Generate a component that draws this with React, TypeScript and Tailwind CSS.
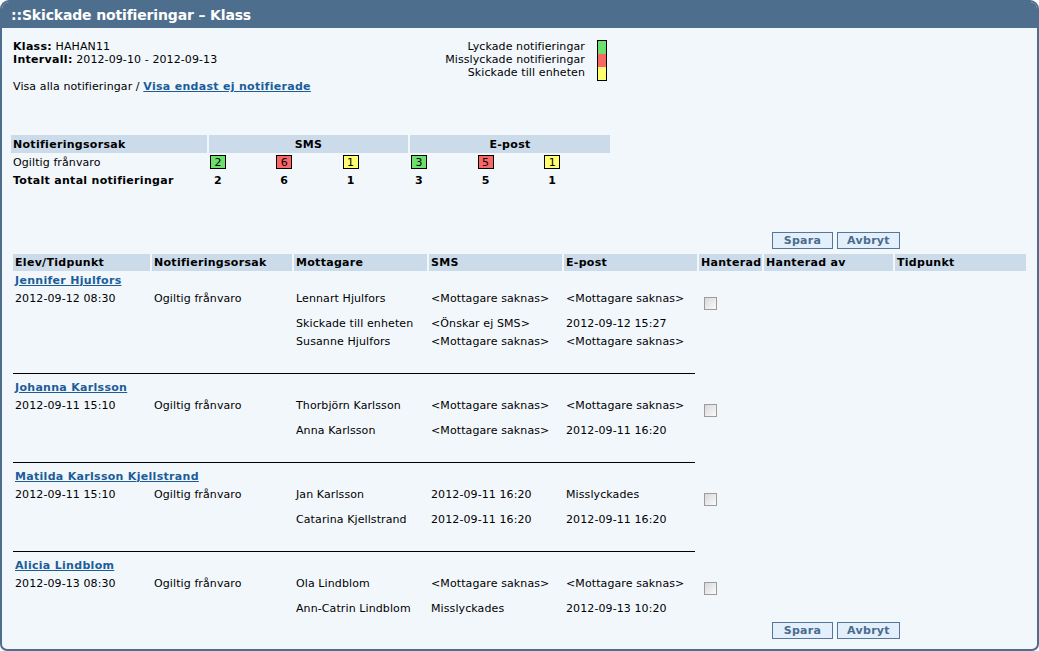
import React from "react";

type Recipient = { name: string; sms: string; email: string };
type Student = { name: string; time: string; reason: string; recipients: Recipient[] };

const students: Student[] = [
  {
    name: "Jennifer Hjulfors",
    time: "2012-09-12 08:30",
    reason: "Ogiltig frånvaro",
    recipients: [
      { name: "Lennart Hjulfors", sms: "<Mottagare saknas>", email: "<Mottagare saknas>" },
      { name: "Skickade till enheten", sms: "<Önskar ej SMS>", email: "2012-09-12 15:27" },
      { name: "Susanne Hjulfors", sms: "<Mottagare saknas>", email: "<Mottagare saknas>" },
    ],
  },
  {
    name: "Johanna Karlsson",
    time: "2012-09-11 15:10",
    reason: "Ogiltig frånvaro",
    recipients: [
      { name: "Thorbjörn Karlsson", sms: "<Mottagare saknas>", email: "<Mottagare saknas>" },
      { name: "Anna Karlsson", sms: "<Mottagare saknas>", email: "2012-09-11 16:20" },
    ],
  },
  {
    name: "Matilda Karlsson Kjellstrand",
    time: "2012-09-11 15:10",
    reason: "Ogiltig frånvaro",
    recipients: [
      { name: "Jan Karlsson", sms: "2012-09-11 16:20", email: "Misslyckades" },
      { name: "Catarina Kjellstrand", sms: "2012-09-11 16:20", email: "2012-09-11 16:20" },
    ],
  },
  {
    name: "Alicia Lindblom",
    time: "2012-09-13 08:30",
    reason: "Ogiltig frånvaro",
    recipients: [
      { name: "Ola Lindblom", sms: "<Mottagare saknas>", email: "<Mottagare saknas>" },
      { name: "Ann-Catrin Lindblom", sms: "Misslyckades", email: "2012-09-13 10:20" },
    ],
  },
];

const GRID = "grid grid-cols-[137px_140px_133px_133px_133px_63px_129px_131px] gap-x-[2px]";
const SUM_GRID = "grid grid-cols-[196px_199px_200px] gap-x-[2px]";
const BOLD = "font-bold tracking-[0.3px]";

const Badge: React.FC<{ value: number; color: string }> = ({ value, color }) => (
  <div className={`w-[16px] h-[14px] border border-black flex items-center justify-center ${color}`}>
    {value}
  </div>
);

const Buttons: React.FC = () => (
  <div className="flex justify-end gap-[4px] pr-[137px]">
    <button className={`w-[61px] h-[17px] border border-[#557799] bg-[#e3f0fb] text-[#4a6b8e] leading-[15px] ${BOLD}`}>
      Spara
    </button>
    <button className={`w-[63px] h-[17px] border border-[#557799] bg-[#e3f0fb] text-[#4a6b8e] leading-[15px] ${BOLD}`}>
      Avbryt
    </button>
  </div>
);

const Checkbox: React.FC = () => (
  <div className="w-[13px] h-[13px] border border-[#9c9c9c] bg-gradient-to-br from-[#d8d8d8] to-[#fbfbfb]" />
);

const App: React.FC = () => {
  const sms = [
    { v: 2, c: "bg-[#6ddf6d]" },
    { v: 6, c: "bg-[#f86666]" },
    { v: 1, c: "bg-[#ffff70]" },
  ];
  const mail = [
    { v: 3, c: "bg-[#6ddf6d]" },
    { v: 5, c: "bg-[#f86666]" },
    { v: 1, c: "bg-[#ffff70]" },
  ];

  return (
    <div className="w-[1039px] h-[651px] border-2 border-[#4e6e8e] rounded-t-[9px] rounded-b-[7px] bg-[#f2f7fc] overflow-hidden text-[11px] leading-[13px] tracking-[0.1px] text-black font-['DejaVu_Sans',sans-serif]">
      <div className="h-[26px] bg-[#4e6e8e] text-white font-bold text-[14px] tracking-[-0.15px] pl-[9px] flex items-center">
        ::Skickade notifieringar – Klass
      </div>

      {/* info + legend */}
      <div className="flex pt-[12px]">
        <div className="w-[428px] pl-[11px]">
          <div>
            <b className={BOLD}>Klass:</b> HAHAN11
          </div>
          <div>
            <b className={BOLD}>Intervall:</b> 2012-09-10 - 2012-09-13
          </div>
          <div className="mt-[14px] leading-[14px]">
            Visa alla notifieringar /{" "}
            <a href="#" className={`underline text-[#1c5d99] ${BOLD}`}>
              Visa endast ej notifierade
            </a>
          </div>
        </div>
        <div className="flex">
          <div className="w-[155px] text-right whitespace-nowrap">
            <div>Lyckade notifieringar</div>
            <div>Misslyckade notifieringar</div>
            <div>Skickade till enheten</div>
          </div>
          <div className="ml-[12px] w-[10px] border border-black flex flex-col h-[41px]">
            <div className="flex-1 bg-[#6ddf6d]" />
            <div className="flex-1 bg-[#f86666]" />
            <div className="flex-1 bg-[#ffff70]" />
          </div>
        </div>
      </div>

      {/* summary */}
      <div className="ml-[9px] mt-[41px] w-[599px]">
        <div className={`${SUM_GRID} h-[18px] ${BOLD}`}>
          <div className="bg-[#cbdbea] pl-[2px] flex items-center">Notifieringsorsak</div>
          <div className="bg-[#cbdbea] flex items-center justify-center">SMS</div>
          <div className="bg-[#cbdbea] flex items-center justify-center">E-post</div>
        </div>
        <div className={`${SUM_GRID} h-[18px] items-center`}>
          <div className="pl-[2px]">Ogiltig frånvaro</div>
          <div className="flex">
            {sms.map((b, i) => (
              <div key={i} className="w-[67px] pl-[1px]">
                <Badge value={b.v} color={b.c} />
              </div>
            ))}
          </div>
          <div className="flex">
            {mail.map((b, i) => (
              <div key={i} className="w-[67px] pl-[1px]">
                <Badge value={b.v} color={b.c} />
              </div>
            ))}
          </div>
        </div>
        <div className={`${SUM_GRID} h-[19px] items-center ${BOLD}`}>
          <div className="pl-[2px] whitespace-nowrap">Totalt antal notifieringar</div>
          <div className="flex">
            {sms.map((b, i) => (
              <div key={i} className="w-[67px] pl-[1px]">
                <div className="w-[16px] text-center">{b.v}</div>
              </div>
            ))}
          </div>
          <div className="flex">
            {mail.map((b, i) => (
              <div key={i} className="w-[67px] pl-[1px]">
                <div className="w-[16px] text-center">{b.v}</div>
              </div>
            ))}
          </div>
        </div>
      </div>

      <div className="mt-[42px]">
        <Buttons />
      </div>

      {/* main table */}
      <div className="ml-[11px] mt-[5px]">
        <div className={`${GRID} h-[17px] ${BOLD}`}>
          {["Elev/Tidpunkt", "Notifieringsorsak", "Mottagare", "SMS", "E-post", "Hanterad", "Hanterad av", "Tidpunkt"].map(
            (h, i) => (
              <div key={i} className="bg-[#cbdbea] pl-[2px] flex items-center whitespace-nowrap overflow-hidden">
                {h}
              </div>
            )
          )}
        </div>

        {students.map((s, si) => (
          <div key={si} className={si > 0 ? "mt-[4px]" : ""}>
            <div className="h-[19px] pl-[2px] flex items-center leading-[14px]">
              <a href="#" className={`underline text-[#1c5d99] ${BOLD}`}>
                {s.name}
              </a>
            </div>
            {s.recipients.map((r, ri) => (
              <div
                key={ri}
                className={`${GRID} ${ri === 0 ? "h-[25px]" : "h-[18px]"} leading-[14px] pt-[2px] whitespace-nowrap`}
              >
                <div className="pl-[2px]">{ri === 0 ? s.time : ""}</div>
                <div className="pl-[2px]">{ri === 0 ? s.reason : ""}</div>
                <div className="pl-[2px]">{r.name}</div>
                <div className="pl-[2px]">{r.sms}</div>
                <div className="pl-[2px]">{r.email}</div>
                <div className="pl-[5px] pt-[5px]">{ri === 0 ? <Checkbox /> : null}</div>
                <div />
                <div />
              </div>
            ))}
            {si < students.length - 1 && <div className="mt-[22px] h-[1px] w-[682px] bg-black" />}
          </div>
        ))}
      </div>

      <div className="mt-[4px]">
        <Buttons />
      </div>
    </div>
  );
};

export default App;
